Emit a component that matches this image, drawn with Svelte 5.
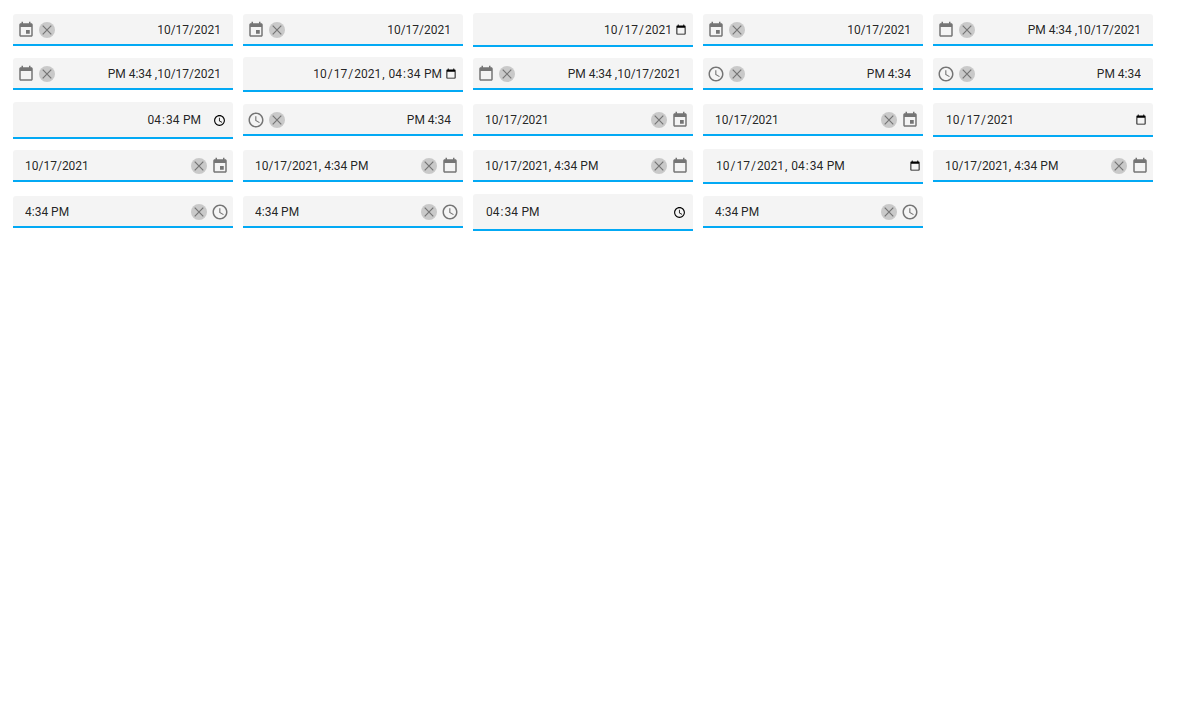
<script>
  const text = {
    date: '10/17/2021',
    datetime: '10/17/2021, 4:34 PM',
    time: '4:34 PM'
  };

  const nativeType = { date: 'date', datetime: 'datetime-local', time: 'time' };
  const nativeValue = { date: '2021-10-17', datetime: '2021-10-17T16:34', time: '16:34' };

  const types = ['date', 'datetime', 'time'];
  const pickers = ['calendar', 'list', 'native', 'rollers'];

  const boxes = [true, false].flatMap((rtl) =>
    types.flatMap((type) => pickers.map((picker) => ({ rtl, type, native: picker === 'native' })))
  );
</script>

<main>
  {#each boxes as box}
    {#if box.native}
      <div class="box native {box.type}" class:end={box.rtl}>
        <input type={nativeType[box.type]} value={nativeValue[box.type]} aria-label={box.type} />
      </div>
    {:else}
      <div class="box" dir={box.rtl ? 'rtl' : 'ltr'}>
        <input type="text" value={text[box.type]} aria-label={box.type} />
        <button class="clear" type="button" aria-label="Clear">
          <svg viewBox="0 0 16 16"><path d="M3.7 3.7l8.6 8.6M12.3 3.7l-8.6 8.6" /></svg>
        </button>
        <button class="open" type="button" aria-label="Select">
          <svg viewBox="0 0 24 24">
            {#if box.type === 'time'}
              <path d="M11.99 2C6.47 2 2 6.48 2 12s4.47 10 9.99 10C17.52 22 22 17.52 22 12S17.52 2 11.99 2zM12 20c-4.42 0-8-3.58-8-8s3.58-8 8-8 8 3.58 8 8-3.58 8-8 8zm.5-13H11v6l5.25 3.15.75-1.23-4.5-2.67V7z" />
            {:else}
              <path d="M16 1v2H8V1H6v2H5c-1.11 0-1.99.9-1.99 2L3 19c0 1.1.89 2 2 2h14c1.1 0 2-.9 2-2V5c0-1.1-.9-2-2-2h-1V1h-2zm3 18H5V8h14v11z" />
              {#if box.type === 'date'}
                <path d="M17 12h-5v5h5v-5z" />
              {/if}
            {/if}
          </svg>
        </button>
      </div>
    {/if}
  {/each}
</main>

<style>
  :global(body) {
    margin: 0;
    background: #fff;
  }

  main {
    display: flex;
    flex-wrap: wrap;
    align-items: baseline;
    padding: 8px;
    font-family: Roboto, sans-serif;
    font-size: 12px;
  }

  .box {
    display: flex;
    align-items: center;
    box-sizing: border-box;
    flex: 0 0 220px;
    min-width: 0;
    margin: 5px;
    padding-inline-end: 4px;
    background: #f4f4f4;
    border-radius: 3px 3px 0 0;
    box-shadow: inset 0 -2px #03a9f4;
  }

  input {
    flex: 1;
    min-width: 0;
    box-sizing: border-box;
    height: 32px;
    margin: 0;
    padding: 0;
    padding-inline-start: 12px;
    border: 0;
    outline: 0;
    background: transparent;
    color: rgba(0, 0, 0, 0.87);
    font: inherit;
  }

  button {
    display: flex;
    flex: none;
    padding: 0;
    border: 0;
    background: none;
    cursor: pointer;
  }

  .clear {
    width: 16px;
    height: 16px;
    margin-inline-end: 4px;
    border-radius: 50%;
    background: #c9c9c9;
  }

  .clear path {
    fill: none;
    stroke: #757575;
    stroke-width: 1.2;
  }

  .open {
    width: 18px;
    height: 18px;
    fill: #757575;
  }

  svg {
    display: block;
    width: 100%;
    height: 100%;
  }

  .native {
    padding: 0;
  }

  .native input {
    height: 34px;
    padding-right: 4px;
  }

  .native.datetime input {
    height: 35px;
    padding-right: 0;
    padding-bottom: 1px;
  }

  .native.time input {
    height: 37px;
    padding-bottom: 1px;
  }

  .native.end input {
    padding-right: 4px;
  }

  .end input::-webkit-datetime-edit {
    text-align: right;
  }

  input::-webkit-calendar-picker-indicator {
    margin-inline-start: 0;
  }

  .time input::-webkit-calendar-picker-indicator {
    width: 13px;
    height: 13px;
  }

  .end.time input::-webkit-calendar-picker-indicator {
    margin-inline-start: 8px;
  }
</style>
